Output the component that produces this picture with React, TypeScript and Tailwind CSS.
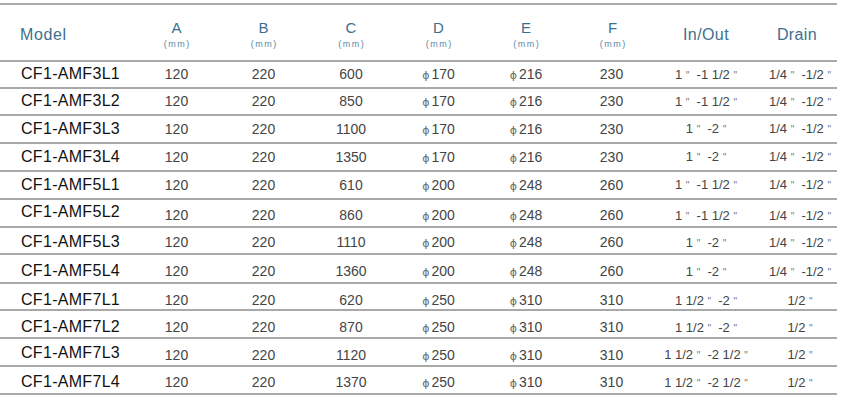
const rows: { model: string; a: string; b: string; c: string; d: string; e: string; f: string; io: string; drain: string; h: string; m: string }[] = [
  { model: 'CF1-AMF3L1', a: '120', b: '220', c: '600', d: '170', e: '216', f: '230', io: '1 "  -1 1/2 "', drain: '1/4 "  -1/2 "', h: 'h-[27px]', m: 'pb-[1px]' },
  { model: 'CF1-AMF3L2', a: '120', b: '220', c: '850', d: '170', e: '216', f: '230', io: '1 "  -1 1/2 "', drain: '1/4 "  -1/2 "', h: 'h-[27px]', m: 'pb-[1px]' },
  { model: 'CF1-AMF3L3', a: '120', b: '220', c: '1100', d: '170', e: '216', f: '230', io: '1 "  -2 "', drain: '1/4 "  -1/2 "', h: 'h-[28px]', m: 'pb-[1px]' },
  { model: 'CF1-AMF3L4', a: '120', b: '220', c: '1350', d: '170', e: '216', f: '230', io: '1 "  -2 "', drain: '1/4 "  -1/2 "', h: 'h-[28px]', m: 'pb-[1px]' },
  { model: 'CF1-AMF5L1', a: '120', b: '220', c: '610', d: '200', e: '248', f: '260', io: '1 "  -1 1/2 "', drain: '1/4 "  -1/2 "', h: 'h-[28px]', m: 'pb-[1px]' },
  { model: 'CF1-AMF5L2', a: '120', b: '220', c: '860', d: '200', e: '248', f: '260', io: '1 "  -1 1/2 "', drain: '1/4 "  -1/2 "', h: 'h-[28px]', m: 'pb-[7px]' },
  { model: 'CF1-AMF5L3', a: '120', b: '220', c: '1110', d: '200', e: '248', f: '260', io: '1 "  -2 "', drain: '1/4 "  -1/2 "', h: 'h-[27px] pt-[2px]', m: 'pb-[1px]' },
  { model: 'CF1-AMF5L4', a: '120', b: '220', c: '1360', d: '200', e: '248', f: '260', io: '1 "  -2 "', drain: '1/4 "  -1/2 "', h: 'h-[29px] pt-[4px]', m: 'pb-[1px]' },
  { model: 'CF1-AMF7L1', a: '120', b: '220', c: '620', d: '250', e: '310', f: '310', io: '1 1/2 "  -2 "', drain: '1/2 "', h: 'h-[27px] pt-[4px]', m: 'pb-[1px]' },
  { model: 'CF1-AMF7L2', a: '120', b: '220', c: '870', d: '250', e: '310', f: '310', io: '1 1/2 "  -2 "', drain: '1/2 "', h: 'h-[28px] pt-[4px]', m: 'pb-[1px]' },
  { model: 'CF1-AMF7L3', a: '120', b: '220', c: '1120', d: '250', e: '310', f: '310', io: '1 1/2 "  -2 1/2 "', drain: '1/2 "', h: 'h-[28px] pt-[2px]', m: 'pb-[4px]' },
  { model: 'CF1-AMF7L4', a: '120', b: '220', c: '1370', d: '250', e: '310', f: '310', io: '1 1/2 "  -2 1/2 "', drain: '1/2 "', h: 'h-[28px] pt-[3px]', m: 'pb-[1px]' },
];

const grid = 'grid grid-cols-[133px_87px_87px_88px_87px_88px_85px_102px_80px] items-center';

// the inch marks in the source are small and faint
function Inches({ text }: { text: string }) {
  const parts = text.split('"');
  return (
    <span className="whitespace-pre">
      {parts.map((p, i) => (
        <span key={i}>
          {p}
          {i < parts.length - 1 && <span className="text-[10px] text-[#777]">"</span>}
        </span>
      ))}
    </span>
  );
}

function Phi({ v }: { v: string }) {
  return (
    <span>
      <span className="font-['DejaVu_Sans',sans-serif] text-[11px] text-[#666] mr-[2px]">{'\u03D5'}</span>
      {v}
    </span>
  );
}

function HeadCell({ label }: { label: string }) {
  return (
    <div className="flex flex-col items-center pt-[4px]">
      <span className="text-[15px] leading-[16px]">{label}</span>
      <span className="text-[9px] leading-[12px] mt-[2px] tracking-[1.5px] pl-[1.5px] text-[#5a8aa6]">(mm)</span>
    </div>
  );
}

export default function App() {
  return (
    <div className="w-[847px] h-[406px] bg-white pt-[3px] font-['Liberation_Sans',Arial,sans-serif]">
      <div className="w-[837px] border-t-2 border-[#a9a9a9]">
        <div className={`${grid} h-[57px] border-b-2 border-[#a9a9a9] text-[#3d6f8e]`}>
          <div className="pl-[20px] text-[16px] tracking-[0.6px] pt-[4px]">Model</div>
          <HeadCell label="A" />
          <HeadCell label="B" />
          <HeadCell label="C" />
          <HeadCell label="D" />
          <HeadCell label="E" />
          <HeadCell label="F" />
          <div className="text-center text-[16px] tracking-[0.4px] pt-[4px]">In/Out</div>
          <div className="text-center text-[16px] tracking-[0.4px] pt-[4px]">Drain</div>
        </div>
        {rows.map((r) => (
          <div key={r.model} className={`${grid} ${r.h} border-b-2 border-[#a9a9a9] text-[14px] text-[#444]`}>
            <div className={`pl-[21px] text-[16px] tracking-[0.3px] text-[#111] ${r.m}`}>{r.model}</div>
            <div className="text-center">{r.a}</div>
            <div className="text-center">{r.b}</div>
            <div className="text-center">{r.c}</div>
            <div className="text-center"><Phi v={r.d} /></div>
            <div className="text-center"><Phi v={r.e} /></div>
            <div className="text-center pr-[2px]">{r.f}</div>
            <div className="text-center text-[13px]"><Inches text={r.io} /></div>
            <div className="text-center text-[13px] pl-[6px]"><Inches text={r.drain} /></div>
          </div>
        ))}
      </div>
    </div>
  );
}
